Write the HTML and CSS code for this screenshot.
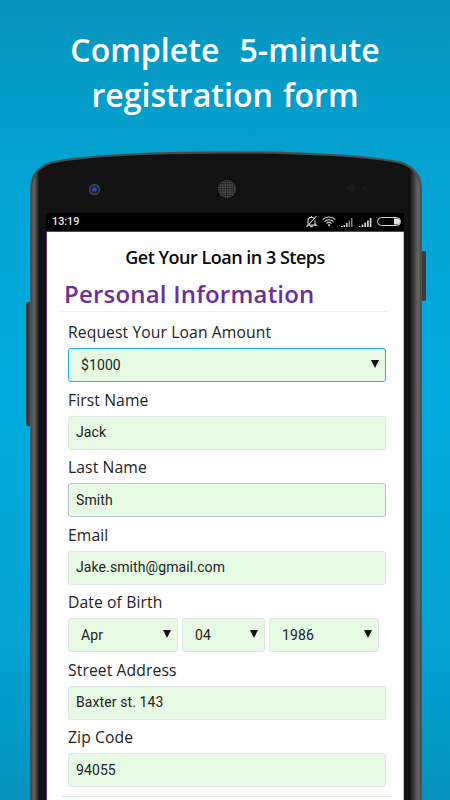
FILE: index.html
```html
<!DOCTYPE html>
<html lang="en">
<head>
<meta charset="utf-8">
<title>Complete 5-minute registration form</title>
<link rel="stylesheet" href="styles.css">
</head>
<body>
<main class="page">
  <h1 class="headline">Complete &nbsp;5-minute<br>registration form</h1>
  <div class="phone">
    <span class="side-btn side-left"></span>
    <span class="side-btn side-right"></span>
    <svg class="shell" viewBox="0 0 392 650" aria-hidden="true">
      <defs>
        <linearGradient id="body" gradientUnits="userSpaceOnUse" x1="0" y1="0" x2="392" y2="0">
          <stop offset="0" stop-color="#6a6a6a"/>
          <stop offset=".012" stop-color="#5a5a5a"/>
          <stop offset=".024" stop-color="#121212"/>
          <stop offset=".968" stop-color="#121212"/>
          <stop offset=".99" stop-color="#666"/>
          <stop offset="1" stop-color="#6a6a6a"/>
        </linearGradient>
      </defs>
      <path d="M1.3 650V38C1.3 24 8 17 20 12C50 5 120 1.3 196 1.3S342 5 372 12C384 17 390.7 24 390.7 38V650Z" fill="url(#body)" stroke="#4c4c4c" stroke-width="2.2"/>
    </svg>
    <div class="sensors">
      <span class="camera"></span>
      <svg class="speaker" viewBox="0 0 18 18" aria-hidden="true">
        <defs><pattern id="mesh" width="2.4" height="2.4" patternUnits="userSpaceOnUse"><circle cx="1.2" cy="1.2" r=".7" fill="#0c0c0c"/></pattern></defs>
        <circle cx="9" cy="9" r="9" fill="#454545"/>
        <circle cx="9" cy="9" r="8.4" fill="url(#mesh)"/>
      </svg>
      <span class="prox prox-a"></span>
      <span class="prox prox-b"></span>
    </div>
    <div class="screen">
      <div class="statusbar">
        <span class="clock">13:19</span>
        <div class="status-icons">
          <svg class="icon-alarm" width="13" height="13" viewBox="0 0 13 13" fill="none" stroke="#d8d8d8" stroke-width="1.1"><path d="M3 9V6a3.6 3.6 0 0 1 6.4-2.3M10 5.6V9l1.2 1.1H3.4l-1.3-.2M1.5 12 11.5 1M5.2 11.6h2.6M6.5 1v1.2"/></svg>
          <svg width="14" height="11" viewBox="0 0 14 11" fill="none" stroke="#e0e0e0" stroke-width="1.1"><path d="M.7 3.6a8.8 8.8 0 0 1 12.6 0M2.6 5.6a6 6 0 0 1 8.8 0M4.5 7.5a3.4 3.4 0 0 1 5 0"/><path d="M5.8 9 7 8l1.2 1L7 10.4Z" fill="#e0e0e0" stroke="none"/></svg>
          <svg class="icon-sim" width="12" height="10" viewBox="0 0 12 10" fill="#d8d8d8"><path d="M0 9h1.5v1H0ZM2.5 8h1.5v2H2.5ZM5 6h1.5v4H5Z"/><path d="M7.5 3.5H9V10H7.5ZM10 1h1.5v9H10Z" opacity=".6"/></svg>
          <svg width="13" height="10" viewBox="0 0 13 10" fill="#e0e0e0"><path d="M0 9h1.6v1H0ZM2.7 7.5h1.6V10H2.7ZM5.4 5.5H7V10H5.4ZM8.1 3.5h1.6V10H8.1ZM10.8 1h1.6v9h-1.6Z"/></svg>
          <svg width="24" height="9" viewBox="0 0 24 9"><rect x=".5" y=".5" width="23" height="8" rx="4" fill="none" stroke="#d8d8d8"/><path d="M17 1.4h3a3.1 3.1 0 0 1 0 6.2h-3Z" fill="#e0e0e0"/></svg>
        </div>
      </div>
      <div class="content">
        <h2 class="steps">Get Your Loan in 3 Steps</h2>
        <h3 class="section">Personal Information</h3>
        <form class="form">
          <div class="field">
            <span class="label">Request Your Loan Amount</span>
            <div class="control select focus"><span>$1000</span><i class="arrow"></i></div>
          </div>
          <div class="field">
            <span class="label">First Name</span>
            <div class="control">Jack</div>
          </div>
          <div class="field">
            <span class="label">Last Name</span>
            <div class="control active">Smith</div>
          </div>
          <div class="field">
            <span class="label">Email</span>
            <div class="control">Jake.smith@gmail.com</div>
          </div>
          <div class="field">
            <span class="label">Date of Birth</span>
            <div class="dob">
              <div class="control select month"><span>Apr</span><i class="arrow"></i></div>
              <div class="control select day"><span>04</span><i class="arrow"></i></div>
              <div class="control select year"><span>1986</span><i class="arrow"></i></div>
            </div>
          </div>
          <div class="field">
            <span class="label">Street Address</span>
            <div class="control">Baxter st. 143</div>
          </div>
          <div class="field">
            <span class="label">Zip Code</span>
            <div class="control">94055</div>
          </div>
          <div class="next-rule"></div>
        </form>
      </div>
    </div>
  </div>
</main>
</body>
</html>
```
FILE: styles.css
```css
* { box-sizing: border-box; }
html, body { margin: 0; height: 100%; }
body { overflow: hidden; font-family: "Open Sans", sans-serif; }
.page {
  height: 800px;
  overflow: hidden;
  background: linear-gradient(#0895be, #02a5d5 25%, #00aade 50%, #02a3d2 80%, #0694bf);
}
.headline {
  margin: 0;
  padding-top: 27px;
  height: 151px;
  text-align: center;
  color: #fff;
  font-size: 32.1px;
  font-weight: 600;
  line-height: 45px;
  word-spacing: 1.7px;
}
.phone {
  position: relative;
  width: 392px;
  height: 649px;
  margin-left: 30px;
}
.shell { position: absolute; inset: 0; width: 392px; height: 650px; }
.side-btn { position: absolute; width: 4px; background: #3a3a3a; }
.side-left { left: -4px; top: 151px; height: 124px; border-radius: 2px 0 0 2px; }
.side-right { right: -4px; top: 100px; height: 50px; border-radius: 0 2px 2px 0; }
.sensors { position: relative; height: 62px; }
.camera {
  position: absolute; left: 59px; top: 33px; width: 11px; height: 11px; border-radius: 50%;
  background: radial-gradient(circle, #2c46c8 0 20%, #141c34 36%, #39434c 62%, #7c858a 88%);
}
.speaker { position: absolute; left: 188px; top: 29px; width: 18px; height: 18px; }
.prox { position: absolute; border-radius: 50%; background: #1a1a1a; }
.prox-a { left: 317px; top: 33px; width: 9px; height: 9px; }
.prox-b { left: 332px; top: 35px; width: 5px; height: 5px; }
.screen { position: relative; width: 358px; margin-left: 16px; }
.statusbar {
  display: flex; align-items: center; justify-content: space-between;
  height: 19px; padding: 0 3px 1px 6px;
  background: #000; border-bottom: 1px solid #6a3093;
}
.clock { color: #e8e8e8; font-family: Roboto, sans-serif; font-size: 10.8px; font-weight: 500; }
.status-icons { display: flex; align-items: center; gap: 5px; }
.icon-alarm { margin-right: -1px; }
.icon-sim { margin-right: 1px; }
.content {
  background: #fff;
  height: 568px;
  overflow: hidden;
  border-left: 1px solid #6a3093;
  border-right: 1px solid #cbb6dc;
  padding: 0 0 0 11px;
}
.steps {
  margin: 0 0 0 -11px; padding-top: 13px; height: 45px;
  text-align: center; color: #0a0a0a;
  font-size: 18px; font-weight: 600; line-height: 24px; letter-spacing: -.5px;
}
.section {
  margin: 0; width: 331px; height: 35px; padding-left: 6px;
  color: #6a3093; border-bottom: 1px solid #fbe9fd;
  font-size: 24px; font-weight: 600; line-height: 34px; letter-spacing: .2px;
}
.form { margin: 0; padding: 10px 0 0 10px; }
.field { height: 67.5px; }
.label {
  display: block; height: 26px;
  color: #222; font-size: 15.7px; line-height: 21px; letter-spacing: .1px;
}
.control {
  display: flex; align-items: center; justify-content: space-between;
  width: 318px; height: 34px; padding: 0 7px 1px;
  color: #212121; background: #e6fae4;
  border: 1.5px solid #e0e6e3; border-radius: 3px;
  font-family: Roboto, sans-serif; font-size: 14px; letter-spacing: .1px;
}
.select { padding: 0 6px 1px 12px; }
.focus { border-color: #19b8ee; }
.active { border-color: #b3c3c9; }
.arrow {
  width: 0; height: 0; margin-bottom: 1px;
  border-left: 4px solid transparent; border-right: 4px solid transparent; border-top: 8px solid #111;
}
.dob { display: flex; gap: 4px; }
.month { width: 110px; }
.day { width: 83px; }
.year { width: 110px; }
.next-rule { width: 330px; margin-left: -6px; border-top: 1px solid #dfe3ea; margin-top: 1px; }
```
